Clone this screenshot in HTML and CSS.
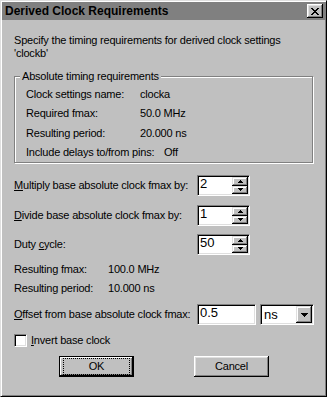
FILE: index.html
```html
<!DOCTYPE html>
<html>
<head>
<meta charset="utf-8">
<title>Derived Clock Requirements</title>
<link rel="stylesheet" href="styles.css">
</head>
<body>
<div class="window">
  <div class="titlebar">
    <span class="title">Derived Clock Requirements</span>
    <span class="close">
      <svg width="8" height="7" viewBox="0 0 8 7" shape-rendering="crispEdges"><path d="M0 0h2v1H0zM6 0h2v1H6zM1 1h2v1H1zM5 1h2v1H5zM2 2h4v1H2zM3 3h2v1H3zM2 4h4v1H2zM1 5h2v1H1zM5 5h2v1H5zM0 6h2v1H0zM6 6h2v1H6z" fill="#000"/></svg>
    </span>
  </div>
  <div class="content">
    <p class="intro">Specify the timing requirements for derived clock settings<br>'clockb'</p>
    <fieldset class="group">
      <legend>Absolute timing requirements</legend>
      <div class="info">
        <div class="info-row"><span class="info-label">Clock settings name:</span><span>clocka</span></div>
        <div class="info-row tall"><span class="info-label">Required fmax:</span><span>50.0 MHz</span></div>
        <div class="info-row"><span class="info-label">Resulting period:</span><span>20.000 ns</span></div>
        <div class="info-row"><span class="info-label wide">Include delays to/from pins:</span><span>Off</span></div>
      </div>
    </fieldset>

    <div class="field-row first">
      <span class="field-label"><u>M</u>ultiply base absolute clock fmax by:</span>
      <div class="spin">
        <span class="edit-text">2</span>
        <span class="spin-btns">
          <span class="sbtn"><svg width="5" height="3" viewBox="0 0 5 3" shape-rendering="crispEdges"><path d="M2 0h1v1H2zM1 1h3v1H1zM0 2h5v1H0z"/></svg></span>
          <span class="sbtn"><svg width="5" height="3" viewBox="0 0 5 3" shape-rendering="crispEdges"><path d="M0 0h5v1H0zM1 1h3v1H1zM2 2h1v1H2z"/></svg></span>
        </span>
      </div>
    </div>
    <div class="field-row second">
      <span class="field-label"><u>D</u>ivide base absolute clock fmax by:</span>
      <div class="spin">
        <span class="edit-text">1</span>
        <span class="spin-btns">
          <span class="sbtn"><svg width="5" height="3" viewBox="0 0 5 3" shape-rendering="crispEdges"><path d="M2 0h1v1H2zM1 1h3v1H1zM0 2h5v1H0z"/></svg></span>
          <span class="sbtn"><svg width="5" height="3" viewBox="0 0 5 3" shape-rendering="crispEdges"><path d="M0 0h5v1H0zM1 1h3v1H1zM2 2h1v1H2z"/></svg></span>
        </span>
      </div>
    </div>
    <div class="field-row third">
      <span class="field-label">Duty <u>c</u>ycle:</span>
      <div class="spin">
        <span class="edit-text">50</span>
        <span class="spin-btns">
          <span class="sbtn"><svg width="5" height="3" viewBox="0 0 5 3" shape-rendering="crispEdges"><path d="M2 0h1v1H2zM1 1h3v1H1zM0 2h5v1H0z"/></svg></span>
          <span class="sbtn"><svg width="5" height="3" viewBox="0 0 5 3" shape-rendering="crispEdges"><path d="M0 0h5v1H0zM1 1h3v1H1zM2 2h1v1H2z"/></svg></span>
        </span>
      </div>
    </div>

    <div class="results">
      <div class="result-row"><span class="result-label">Resulting fmax:</span><span>100.0 MHz</span></div>
      <div class="result-row"><span class="result-label">Resulting period:</span><span>10.000 ns</span></div>
    </div>

    <div class="field-row offset">
      <span class="field-label"><u>O</u>ffset from base absolute clock fmax:</span>
      <div class="edit"><span class="edit-text">0.5</span></div>
      <div class="combo">
        <span class="combo-text">ns</span>
        <span class="combo-btn"><svg width="7" height="4" viewBox="0 0 7 4" shape-rendering="crispEdges"><path d="M0 0h7v1H0zM1 1h5v1H1zM2 2h3v1H2zM3 3h1v1H3z"/></svg></span>
      </div>
    </div>

    <div class="check-row">
      <span class="check"></span>
      <span class="check-label"><u>I</u>nvert base clock</span>
    </div>

    <div class="buttons">
      <span class="btn default"><span class="focus">OK</span></span>
      <span class="btn cancel">Cancel</span>
    </div>
  </div>
</div>
</body>
</html>
```
FILE: styles.css
```css
* { box-sizing: border-box; }
html, body { margin: 0; padding: 0; }
body {
  width: 327px;
  height: 397px;
  overflow: hidden;
  background: #c0c0c0;
  color: #000;
  font-family: "Liberation Sans", Arial, sans-serif;
  font-size: 11px;
}
.window {
  width: 327px;
  height: 397px;
  border: 1px solid;
  border-color: #dfdfdf #000 #000 #dfdfdf;
  box-shadow: inset 1px 1px 0 #fff, inset -1px -1px 0 #808080;
  padding: 1px;
  background: #c0c0c0;
  display: flex;
  flex-direction: column;
}
.titlebar {
  height: 18px;
  flex: 0 0 18px;
  background: #808080;
  display: flex;
  align-items: center;
  padding: 0 2px 0 3px;
}
.title {
  flex: 1;
  font-weight: bold;
  font-size: 12px;
  line-height: 18px;
  color: #000;
  white-space: nowrap;
}
.close {
  width: 16px;
  height: 14px;
  background: #c0c0c0;
  box-shadow: inset -1px -1px 0 #000, inset 1px 1px 0 #fff, inset -2px -2px 0 #808080, inset 2px 2px 0 #dfdfdf;
  display: flex;
  align-items: center;
  justify-content: center;
}
.close svg { display: block; }
.content {
  flex: 1;
  padding: 0 12px;
  display: flex;
  flex-direction: column;
  letter-spacing: -0.2px;
}
.intro {
  margin: 14px 0 0;
  line-height: 13px;
  white-space: nowrap;
}
.group {
  margin: 10px 0 0;
  padding: 0 0 0 11px;
  border: 1px solid #808080;
  box-shadow: inset 1px 1px 0 #fff, 1px 1px 0 #fff;
  min-width: 0;
}
.group legend {
  padding: 0 2px;
  margin-left: -6px;
  line-height: 13px;
  background: #c0c0c0;
}
.info { padding-top: 2px; }
.info-row {
  display: flex;
  height: 19px;
  line-height: 19px;
  white-space: nowrap;
}
.info-row.tall { height: 20px; }
.info-label { width: 114px; flex: 0 0 auto; }
.info-label.wide { width: 138px; }

.field-row {
  display: flex;
  align-items: center;
  height: 21px;
  white-space: nowrap;
}
.field-row.first { margin-top: 12px; }
.field-row.second { margin-top: 9px; }
.field-row.third { margin-top: 8px; }
.field-row.offset { margin-top: 6px; }
.field-label { flex: 0 0 183px; line-height: 13px; }

.spin, .edit, .combo {
  height: 21px;
  background: #fff;
  border: 1px solid;
  border-color: #808080 #fff #fff #808080;
  box-shadow: inset 1px 1px 0 #000, inset -1px -1px 0 #dfdfdf;
  padding: 1px;
  display: flex;
  flex: 0 0 auto;
  letter-spacing: 0;
}
.spin { width: 53px; }
.edit { width: 59px; }
.combo { width: 54px; margin-left: 4px; }
.edit-text {
  flex: 1;
  font-size: 13px;
  line-height: 14px;
  padding-left: 1px;
}
.spin-btns {
  width: 16px;
  display: flex;
  flex-direction: column;
}
.sbtn {
  flex: 1;
  background: #c0c0c0;
  box-shadow: inset -1px -1px 0 #000, inset 1px 1px 0 #dfdfdf, inset -2px -2px 0 #808080, inset 2px 2px 0 #fff;
  display: flex;
  align-items: center;
  justify-content: center;
}
.sbtn svg, .combo-btn svg { display: block; fill: #000; }
.combo-text {
  flex: 1;
  font-size: 13px;
  line-height: 17px;
  padding-left: 2px;
}
.combo-btn {
  width: 16px;
  background: #c0c0c0;
  box-shadow: inset -1px -1px 0 #000, inset 1px 1px 0 #dfdfdf, inset -2px -2px 0 #808080, inset 2px 2px 0 #fff;
  display: flex;
  align-items: center;
  justify-content: center;
}

.results { margin-top: 5px; }
.result-row {
  display: flex;
  height: 19px;
  line-height: 19px;
  white-space: nowrap;
}
.result-label { width: 94px; flex: 0 0 auto; }

.check-row {
  display: flex;
  align-items: center;
  height: 13px;
  margin-top: 9px;
}
.check {
  width: 13px;
  height: 13px;
  background: #fff;
  border: 1px solid;
  border-color: #808080 #fff #fff #808080;
  box-shadow: inset 1px 1px 0 #000, inset -1px -1px 0 #dfdfdf;
}
.check-label { margin-left: 4px; line-height: 13px; }

.buttons {
  display: flex;
  margin-top: 9px;
  padding-left: 45px;
  gap: 60px;
}
.btn {
  width: 75px;
  height: 21px;
  background: #c0c0c0;
  box-shadow: inset -1px -1px 0 #000, inset 1px 1px 0 #fff, inset -2px -2px 0 #808080, inset 2px 2px 0 #dfdfdf;
  display: flex;
  align-items: center;
  justify-content: center;
  line-height: 13px;
}
.btn.default {
  border: 1px solid #000;
  box-shadow: inset -1px -1px 0 #000, inset 1px 1px 0 #fff, inset -2px -2px 0 #808080;
  align-items: stretch;
}
.focus {
  flex: 1;
  margin: 1px 3px;
  border: 1px dotted #000;
  display: flex;
  align-items: center;
  justify-content: center;
}
```
